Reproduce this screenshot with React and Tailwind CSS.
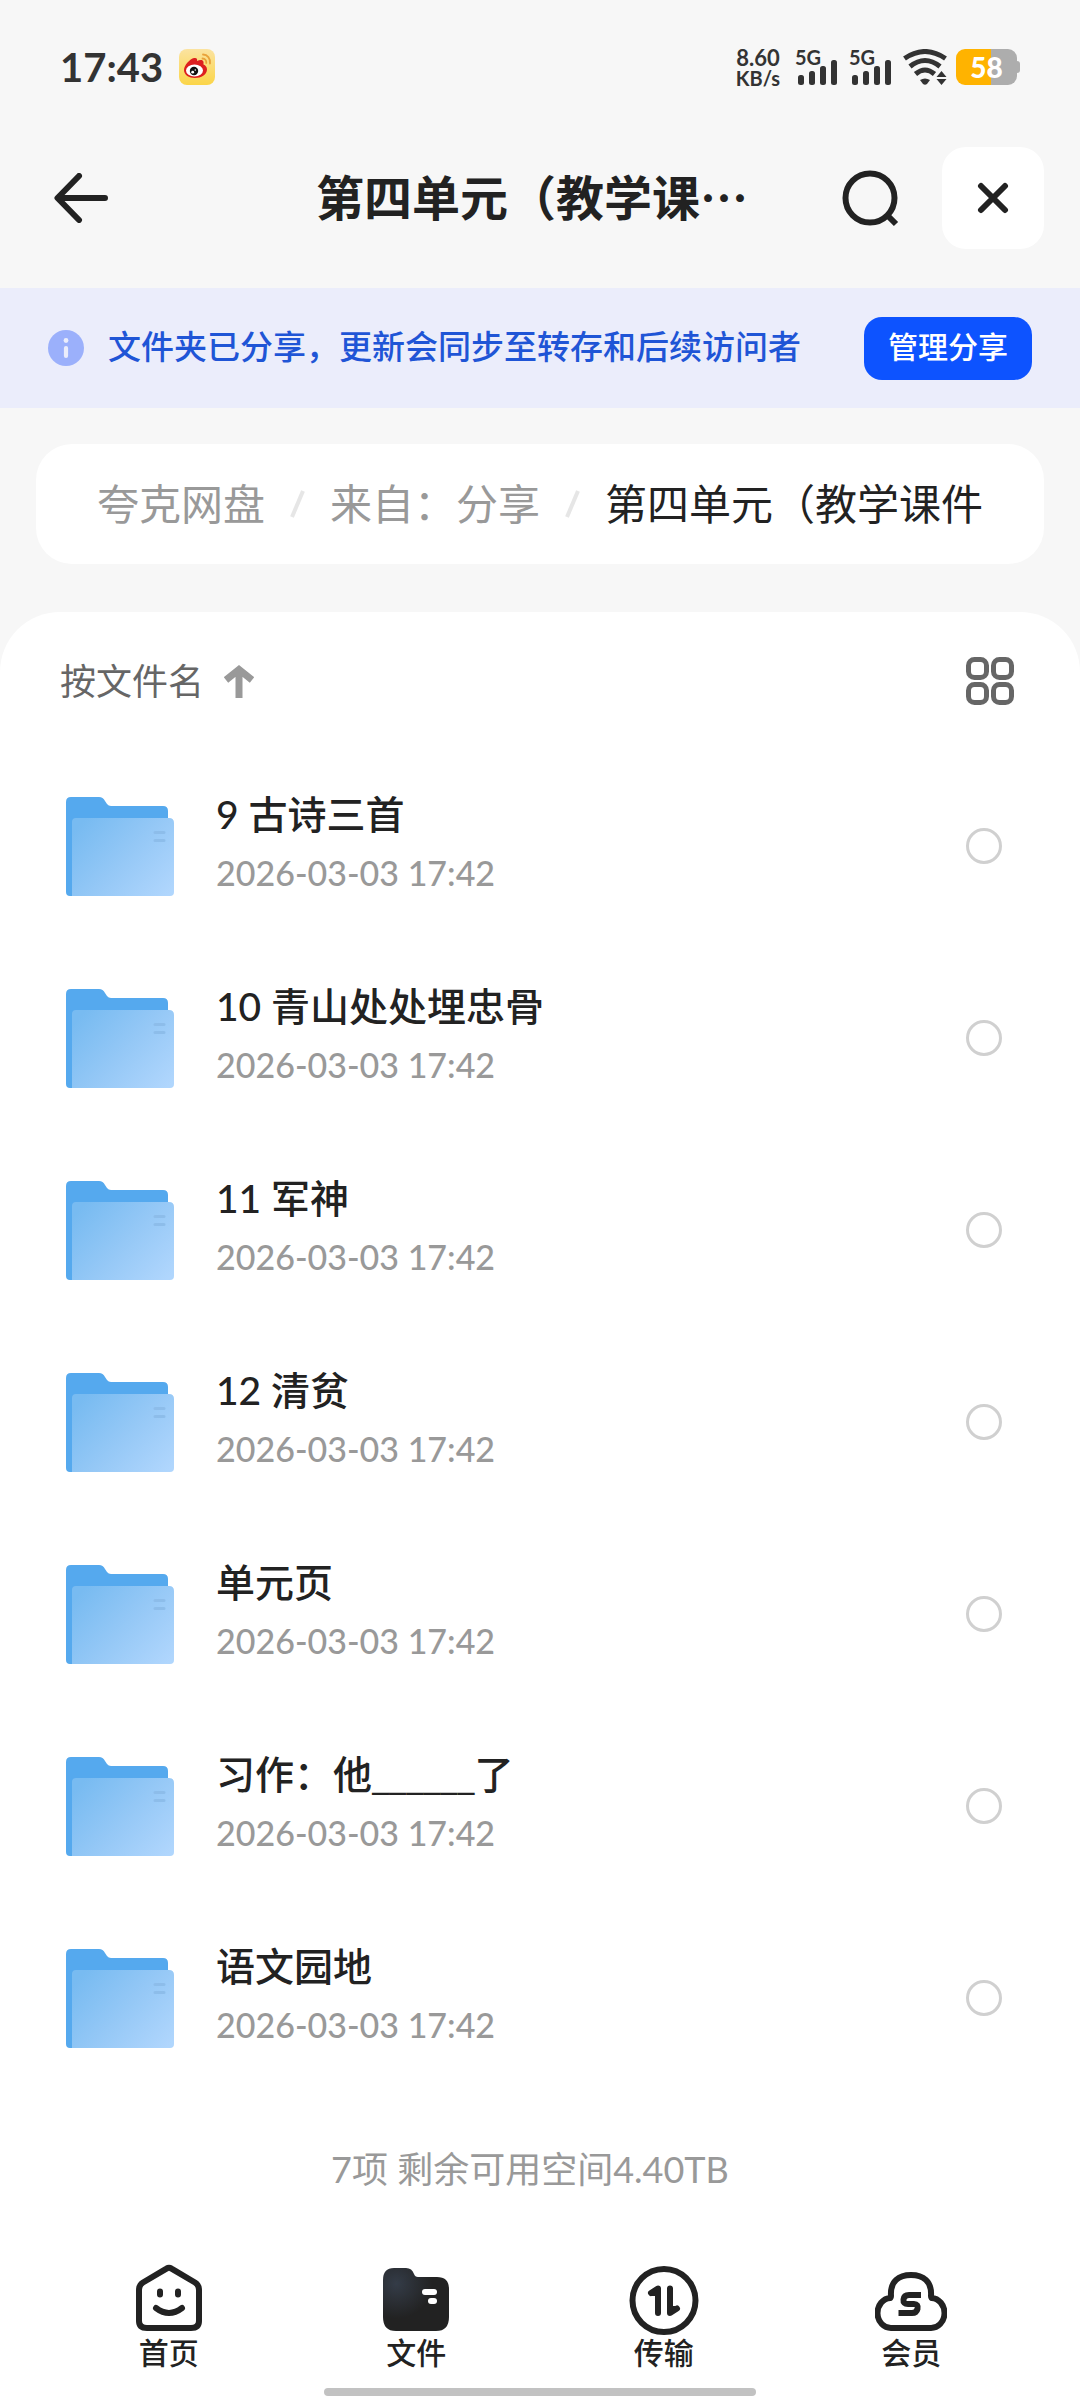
import React, { useState } from "react";

const folders = [
  { id: 1, name: "9 古诗三首", date: "2026-03-03 17:42" },
  { id: 2, name: "10 青山处处埋忠骨", date: "2026-03-03 17:42" },
  { id: 3, name: "11 军神", date: "2026-03-03 17:42" },
  { id: 4, name: "12 清贫", date: "2026-03-03 17:42" },
  { id: 5, name: "单元页", date: "2026-03-03 17:42" },
  { id: 6, name: "习作：他______了", date: "2026-03-03 17:42" },
  { id: 7, name: "语文园地", date: "2026-03-03 17:42" },
];

const WeiboIcon = () => (
  <svg width="36" height="36" viewBox="0 0 36 36">
    <defs>
      <linearGradient id="weibo" x1="0" y1="0" x2="0" y2="1">
        <stop offset="0" stopColor="#fbe3a0" />
        <stop offset="1" stopColor="#fbd548" />
      </linearGradient>
    </defs>
    <rect width="36" height="36" rx="8" fill="url(#weibo)" />
    <path
      d="M5 21c0-5 6-11 10-12 3-.5 3.500 1 3 3 3-1.500 6-1.500 6.500 1 .2 1.200-.2 2 0 2.500 2 1 3.500 2.500 3.500 5 0 5-6 8.500-12 8.500S5 26 5 21z"
      fill="#dd1f1f"
    />
    <ellipse cx="15.500" cy="21.500" rx="8.500" ry="6" fill="#fff" />
    <circle cx="15" cy="22" r="4.200" fill="#111" />
    <circle cx="13.700" cy="23.200" r="1.400" fill="#fff" />
    <circle cx="16.300" cy="21" r=".8" fill="#fff" />
    <path
      d="M24 5.500c4.500 0 7.500 4 7 9M23.500 9.500c2.600 0 4 2 3.800 4.500"
      fill="none"
      stroke="#e9a23a"
      strokeWidth="1.800"
      strokeLinecap="round"
    />
  </svg>
);

const Signal = () => (
  <div className="flex w-[42px] flex-col">
    <span className="h-[11px] text-[20px] leading-[16px] font-bold">5G</span>
    <svg width="42" height="25" viewBox="0 0 42 25" fill="#333">
      <rect x="3" y="15" width="6" height="10" rx="2.500" />
      <rect x="14" y="11" width="6" height="14" rx="2.500" />
      <rect x="25" y="6" width="6" height="19" rx="2.500" />
      <rect x="36" y="0" width="6" height="25" rx="2.500" />
    </svg>
  </div>
);

const WifiIcon = () => (
  <svg width="44" height="36" viewBox="0 0 44 36">
    <g fill="none" stroke="#333" strokeWidth="5">
      <path d="M1.500 9.500Q22-4.500 42.500 9.500" />
      <path d="M7 17.500Q22 5.500 37 17.500" />
      <path d="M12.500 25Q22 17 31.500 25" />
    </g>
    <path
      d="M17 31q5-3 10 0l-3 4q-2 1.500-4 0zM38.500 22l5 6h-10zM38.500 36l5-6h-10z"
      fill="#333"
    />
  </svg>
);

const Battery = () => (
  <div className="flex items-center">
    <div className="flex h-9 w-[61px] items-center justify-center rounded-[9px] bg-linear-to-r from-[#ffb300] from-[57%] to-[#adadad] to-[57%]">
      <span className="text-[28px] leading-[36px] font-black text-white">
        58
      </span>
    </div>
    <div className="h-3 w-[3px] rounded-r-sm bg-[#adadad]" />
  </div>
);

const StatusBar = () => (
  <div className="flex h-[132px] items-start justify-between px-[60px] pt-[49px] text-[#333]">
    <div className="flex h-9 items-center gap-4">
      <span className="text-[40px] leading-[36px] font-bold">17:43</span>
      <WeiboIcon />
    </div>
    <div className="flex items-start">
      <div className="mr-[15px] flex flex-col text-center font-bold">
        <span className="text-[22px] leading-[18px]">8.60</span>
        <span className="text-[20px] leading-[22px]">KB/s</span>
      </div>
      <div className="mr-3 flex gap-3">
        <Signal />
        <Signal />
      </div>
      <div className="mr-[9px]">
        <WifiIcon />
      </div>
      <Battery />
    </div>
  </div>
);

const Header = () => (
  <header className="flex h-[132px] items-center px-9">
    <div className="w-[186px]">
      <button aria-label="返回" className="flex h-[102px] w-[90px] items-center justify-center">
        <svg width="54" height="50" viewBox="0 0 54 50" fill="none" stroke="#222" strokeWidth="6" strokeLinecap="round" strokeLinejoin="round">
          <path d="M25 3L3.500 25L25 47M4 25H51" />
        </svg>
      </button>
    </div>
    <h1 className="flex-1 pb-1.5 text-center font-['Noto_Sans_CJK_SC',sans-serif] text-[48px] leading-[72px] font-bold whitespace-nowrap">
      第四单元（教学课…
    </h1>
    <div className="flex w-[202px] items-center justify-between">
      <button aria-label="搜索">
        <svg width="58" height="58" viewBox="0 0 58 58" fill="none" stroke="#222" strokeWidth="6">
          <circle cx="28" cy="29" r="24.500" />
          <path d="M45 46L54 55" />
        </svg>
      </button>
      <button aria-label="关闭" className="flex h-[102px] w-[102px] items-center justify-center rounded-3xl bg-white">
        <svg width="32" height="32" viewBox="0 0 32 32" fill="none" stroke="#222" strokeWidth="6" strokeLinecap="round">
          <path d="M4 4L28 28M28 4L4 28" />
        </svg>
      </button>
    </div>
  </header>
);

const ShareBanner = () => (
  <div className="mt-6 flex h-[120px] items-center bg-[#ebedfb] px-12">
    <svg width="36" height="36" viewBox="0 0 36 36">
      <circle cx="18" cy="18" r="18" fill="#9bb0fb" />
      <circle cx="18" cy="10.500" r="2.400" fill="#ebedfb" />
      <path d="M18 18V26" stroke="#ebedfb" strokeWidth="4.200" strokeLinecap="round" />
    </svg>
    <p className="ml-6 flex-1 pb-1 text-[33px] leading-[48px] font-medium whitespace-nowrap text-[#1f55d6]">
      文件夹已分享，更新会同步至转存和后续访问者
    </p>
    <button className="h-[63px] rounded-[18px] bg-[#0d53ff] px-6 pb-1 text-[30px] leading-[36px] font-medium text-white">
      管理分享
    </button>
  </div>
);

const Slash = () => (
  <svg className="shrink-0" width="15" height="28" viewBox="0 0 15 28" fill="none" stroke="#e6e6e6" strokeWidth="4">
    <path d="M13 1L2 27" />
  </svg>
);

const Breadcrumb = () => (
  <nav className="mx-9 mt-9 flex h-[120px] items-center gap-[25px] overflow-hidden rounded-[36px] bg-white px-[61px] text-[42px] leading-[60px] whitespace-nowrap">
    <a href="#root-folder" className="text-[#999]">夸克网盘</a>
    <Slash />
    <a href="#shared" className="text-[#999]">来自：分享</a>
    <Slash />
    <span>第四单元（教学课件</span>
  </nav>
);

const FolderIcon = () => (
  <svg width="108" height="99" viewBox="0 0 108 99">
    <defs>
      <linearGradient id="front" x1="0" y1="0.200" x2="1" y2="0.900">
        <stop offset="0" stopColor="#78bbf1" />
        <stop offset="0.500" stopColor="#95c8f6" />
        <stop offset="1" stopColor="#b0d6fd" />
      </linearGradient>
    </defs>
    <path
      d="M5 0H33Q37 0 39 4L41 7Q42.500 9 45 9H97Q102 9 102 14V60H8V99H4Q0 99 0 95V5Q0 0 5 0z"
      fill="#55a9ee"
    />
    <path d="M10 21H103Q108 21 108 26V95Q108 99 104 99H6V25Q6 21 10 21z" fill="url(#front)" />
    <path d="M89 35.500H98M89 43.500H98" stroke="#8dbdea" strokeWidth="3" strokeLinecap="round" />
  </svg>
);

// Lato leaves gaps between underscores, so blanks use Open Sans to draw one solid line
const FolderName = ({ name }) =>
  name.split(/(_+)/).map((part, i) =>
    part.startsWith("_") ? (
      <span key={i} className="font-['Open_Sans',sans-serif]">
        {part}
      </span>
    ) : (
      part
    )
  );

const FolderRow = ({ folder, checked, onToggle }) => (
  <li className="flex h-[192px] items-center pr-[78px] pl-[66px]">
    <FolderIcon />
    <label htmlFor={`folder-${folder.id}`} className="ml-[42px] flex flex-1 flex-col gap-2 pb-2">
      <span className="text-[39px] leading-[54px] font-medium">
        <FolderName name={folder.name} />
      </span>
      <span className="text-[34px] leading-[48px] font-medium text-[#999]">
        {folder.date}
      </span>
    </label>
    <input
      id={`folder-${folder.id}`}
      type="checkbox"
      checked={checked}
      onChange={() => onToggle(folder.id)}
      className="h-9 w-9 appearance-none rounded-full border-3 border-[#d0d0d0] checked:bg-[#0d53ff]"
    />
  </li>
);

const HomeIcon = () => (
  <svg width="66" height="72" viewBox="0 0 66 72" fill="none" stroke="#222" strokeLinecap="round" strokeLinejoin="round">
    <path d="M30.500 4.600Q33 3 35.500 4.600L59 18.500Q63 21 63 26V57Q63 64 55 64H11Q3 64 3 57V26Q3 21 7 18.500z" strokeWidth="6" />
    <path d="M24 27.500V30.500M42 27.500V30.500" strokeWidth="6" />
    <path d="M20 44Q33 54 46 44" strokeWidth="6" />
  </svg>
);

const FilesIcon = () => (
  <svg width="66" height="72" viewBox="0 0 66 72">
    <defs>
      <radialGradient id="files" cx="0.200" cy="0.250" r="0.550">
        <stop offset="0" stopColor="#343c48" />
        <stop offset="1" stopColor="#222" />
      </radialGradient>
    </defs>
    <path
      d="M11 4H23Q29 4 31 10Q32 13 35 13H54Q66 13 66 25V53Q66 67 53 67H13Q0 67 0 53V16Q0 4 11 4z"
      fill="url(#files)"
    />
    <rect x="39" y="25" width="15" height="6" rx="3" fill="#fff" />
    <rect x="45" y="34" width="9" height="6" rx="3" fill="#fff" />
  </svg>
);

const TransferIcon = () => (
  <svg width="70" height="72" viewBox="0 0 70 72">
    <circle cx="35" cy="36.500" r="31.500" fill="none" stroke="#222" strokeWidth="6" />
    <path
      d="M29 49V24.500L22 29M41 24.500V49L48 44.500"
      fill="none"
      stroke="#222"
      strokeWidth="6"
      strokeLinecap="round"
      strokeLinejoin="round"
    />
    <path d="M29 25V32H21zM41 50V42H48z" fill="#222" />
  </svg>
);

const MemberIcon = () => (
  <svg width="72" height="72" viewBox="0 0 72 72" fill="none" stroke="#222">
    <path
      d="M16.500 64A13.500 15 0 0 1 15.500 34Q16 33.500 16 32C15 17 24 11 36 11S57 17 56 32Q56 33.500 56.500 34A13.500 15 0 0 1 55.500 64z"
      strokeWidth="6"
      strokeLinejoin="round"
    />
    <path d="M46 31H34Q29 31 28.500 35.500Q28 40 33 40H39Q43.500 40 42.500 45Q41.500 49 37 49H23.500" strokeWidth="6" />
  </svg>
);

const tabs = [
  { label: "首页", Icon: HomeIcon },
  { label: "文件", Icon: FilesIcon },
  { label: "传输", Icon: TransferIcon },
  { label: "会员", Icon: MemberIcon },
];

const TabBar = () => (
  <nav className="grid grid-cols-4 px-[45px]">
    {tabs.map(({ label, Icon }) => (
      <button key={label} className="flex flex-col items-center">
        <Icon />
        <span className="text-[30px] leading-[32px] font-medium">{label}</span>
      </button>
    ))}
  </nav>
);

const App = () => {
  const [selected, setSelected] = useState([]);

  const handleToggle = (id) => {
    setSelected((prev) =>
      prev.includes(id) ? prev.filter((x) => x !== id) : [...prev, id]
    );
  };

  return (
    <div
      lang="zh-CN"
      className="flex min-h-screen flex-col bg-[#f7f7f7] font-['Lato','Noto_Sans_CJK_SC',sans-serif] text-[#222]">
      <StatusBar />
      <Header />
      <ShareBanner />
      <Breadcrumb />

      <main className="mt-12 flex flex-1 flex-col rounded-t-[60px] bg-white">
        {/* Sort and view controls */}
        <div className="flex h-[138px] items-center justify-between pr-[66px] pl-[60px]">
          <button className="flex items-center gap-5 text-[36px] leading-[48px] text-[#666]">
            按文件名
            <svg width="30" height="33" viewBox="0 0 30 33" fill="none" stroke="#999" strokeWidth="7">
              <path d="M2 15L15 4.500L28 15M15 5V33" />
            </svg>
          </button>
          <button aria-label="网格视图">
            <svg width="48" height="48" viewBox="0 0 48 48" fill="none" stroke="#666" strokeWidth="5">
              <rect x="2.500" y="2.500" width="18" height="18" rx="6" />
              <rect x="27.500" y="2.500" width="18" height="18" rx="6" />
              <rect x="2.500" y="27.500" width="18" height="18" rx="6" />
              <rect x="27.500" y="27.500" width="18" height="18" rx="6" />
            </svg>
          </button>
        </div>

        <ul>
          {folders.map((folder) => (
            <FolderRow
              key={folder.id}
              folder={folder}
              checked={selected.includes(folder.id)}
              onToggle={handleToggle}
            />
          ))}
        </ul>

        <p className="mt-[51px] mb-[71px] pr-5 text-center text-[36px] leading-[48px] text-[#999]">
          7项 剩余可用空间4.40TB
        </p>

        <TabBar />
        {/* Home indicator */}
        <div className="mx-auto mt-5 mb-1 h-2 w-2/5 rounded-full bg-[#c2c2c2]" />
      </main>
    </div>
  );
};

export default App;
